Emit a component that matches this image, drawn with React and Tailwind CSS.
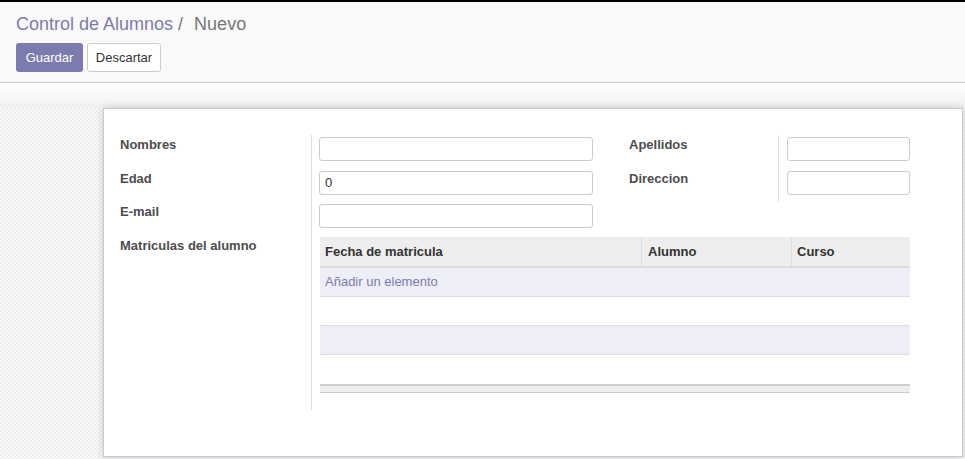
import React from "react";

export default function App() {
  const inputCls =
    "block h-[24px] rounded-[3px] border border-[#cccccc] bg-white px-[5px] text-[13px] text-[#333] outline-none";
  const labelCls = "text-[13px] font-bold leading-[16px] text-[#4c4c4c]";
  return (
    <div className="w-[965px] h-[459px] overflow-hidden border-t-2 border-black bg-white font-['Liberation_Sans',Arial,sans-serif]">
      {/* Control panel */}
      <div className="h-[81px] border-b border-[#cccccc] bg-[#f9f9f9] px-4 pt-[10px]">
        <div className="flex items-center text-[18px] leading-[24px]">
          <span className="text-[#7c7bad]">Control de Alumnos</span>
          <span className="ml-[5px] text-[#777777]">/</span>
          <span className="ml-[11px] text-[#777777]">Nuevo</span>
        </div>
        <div className="mt-[7px] flex gap-[4px]">
          <button className="h-[29px] w-[67px] rounded-[3px] bg-[#7c7bad] text-[13px] text-white">
            Guardar
          </button>
          <button className="h-[29px] w-[74px] rounded-[3px] border border-[#cccccc] bg-white text-[13px] text-[#333]">
            Descartar
          </button>
        </div>
      </div>

      {/* Form background */}
      <div className="h-[25px] bg-gradient-to-b from-[#ffffff] to-[#f1f1f1]" />
      <div className="h-[353px] bg-[#f6f6f6] bg-[conic-gradient(#eeeeee_25%,#fafafa_0_50%,#eeeeee_0_75%,#fafafa_0)] bg-[length:4px_4px] pl-[103px]">
        <div className="h-[349px] w-[860px] border border-[#c9c8d6] bg-white pl-[16px] pt-[26px] shadow-[0_0_8px_rgba(0,0,0,0.18)]">
          {/* groups */}
          <div className="flex">
            {/* left group */}
            <div className="w-[509px]">
              {[
                ["Nombres", ""],
                ["Edad", "0"],
                ["E-mail", ""],
              ].map(([l, v]) => (
                <div key={l} className="flex h-[33.5px]">
                  <div className={`w-[191px] pt-[2px] ${labelCls}`}>{l}</div>
                  <div className="border-l border-[#dddddd] pl-[7px] pt-[2px]">
                    <div className={`${inputCls} w-[274px] leading-[22px]`}>{v}</div>
                  </div>
                </div>
              ))}
            </div>
            {/* right group */}
            <div>
              {["Apellidos", "Direccion"].map((l) => (
                <div key={l} className="flex h-[33.5px]">
                  <div className={`w-[149px] pt-[2px] ${labelCls}`}>{l}</div>
                  <div className="border-l border-[#dddddd] pl-[8px] pt-[2px]">
                    <div className={`${inputCls} w-[123px]`} />
                  </div>
                </div>
              ))}
            </div>
          </div>

          {/* Matriculas row */}
          <div className="flex">
            <div className={`w-[191px] pt-[2px] ${labelCls}`}>Matriculas del alumno</div>
            <div className="border-l border-[#dddddd] pl-[8px] pt-[1.5px] pb-[17px]">
              <div className="w-[590px] text-[13px]">
                <div className="flex h-[31px] border-b-2 border-[#dddddd] bg-[#eeeeee] font-bold text-[#333]">
                  <div className="flex w-[321px] items-center pl-[5px] pt-[1px]">Fecha de matricula</div>
                  <div className="flex w-[150px] items-center border-l border-[#dddddd] pl-[6px] pt-[1px]">Alumno</div>
                  <div className="flex flex-1 items-center border-l border-[#dddddd] pl-[5px] pt-[1px]">Curso</div>
                </div>
                <div className="flex h-[29px] items-center border-b border-[#dddddd] bg-[#eeeef6] pl-[5px] text-[#7c7bad]">
                  Añadir un elemento
                </div>
                <div className="h-[29px] border-b border-[#dddddd] bg-white" />
                <div className="h-[29px] border-b border-[#dddddd] bg-[#eeeef6]" />
                <div className="h-[29px] bg-white" />
                <div className="h-[9px] border-t-2 border-b border-[#cccccc] bg-[#eeeeee]" />
              </div>
            </div>
          </div>
        </div>
      </div>
    </div>
  );
}
